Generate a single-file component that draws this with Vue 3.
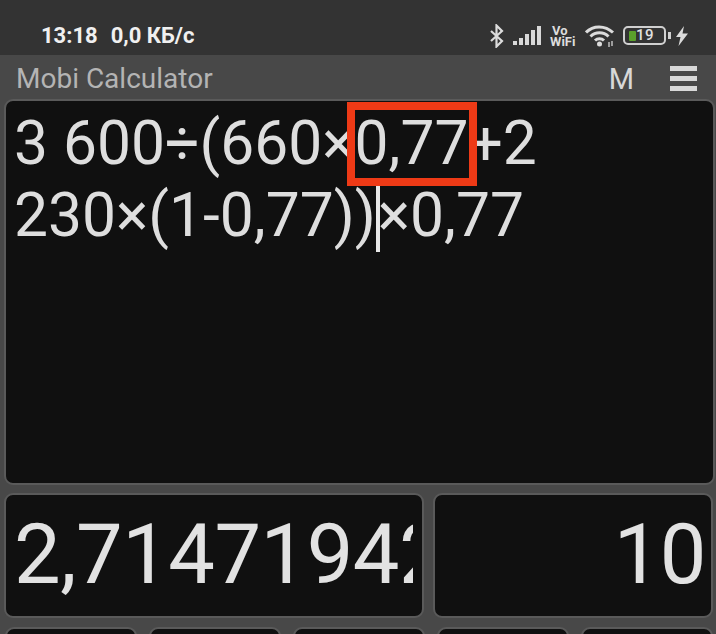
<template>
  <div class="screen">
    <!-- status bar -->
    <div class="status-bar">
      <div class="status-left">
        <span class="clock">13:18</span>
        <span class="speed">0,0 КБ/с</span>
      </div>
      <div class="status-icons">
        <svg width="16" height="24" viewBox="0 0 16 24" class="bt">
          <path d="M2 7l11 10-5.500 5.500V1.500L13 7 2 17" fill="none" stroke="#dcdcdc" stroke-width="2.200" />
        </svg>
        <svg width="29" height="20" viewBox="0 0 29 20" class="signal">
          <rect x="0" y="15" width="4" height="4" fill="#d8d8d8" />
          <rect x="6" y="12" width="4" height="7" fill="#d8d8d8" />
          <rect x="12" y="8" width="4" height="11" fill="#d8d8d8" />
          <rect x="18" y="4" width="4" height="15" fill="#d8d8d8" />
          <rect x="24" y="0" width="4" height="19" fill="#d8d8d8" />
        </svg>
        <div class="vowifi"><span>Vo</span><span>WiFi</span></div>
        <svg width="30" height="24" viewBox="0 0 30 24" class="wifi">
          <path d="M1 8.500C8 1 20 1 28 8.500M5.500 12.500C10.500 7.500 18.500 7.500 23.500 12.500M10 16.500C12.500 14 16.500 14 19 16.500" fill="none" stroke="#dcdcdc" stroke-width="3" />
          <circle cx="14.500" cy="20" r="2.500" fill="#dcdcdc" />
          <path d="M24 18v5M27 17v5" stroke="#c0c0c0" stroke-width="1.500" />
        </svg>
        <div class="battery">
          <div class="battery-body">
            <span class="battery-fill"></span>
            <span class="battery-num">19</span>
          </div>
          <span class="battery-tip"></span>
        </div>
        <svg width="14" height="20" viewBox="0 0 14 20" class="bolt">
          <path d="M9 0L1 11h4.500L3.500 20 13 7.500H7.500z" fill="#dcdcdc" />
        </svg>
      </div>
    </div>

    <!-- app bar -->
    <div class="app-bar">
      <span class="app-title">Mobi Calculator</span>
      <div class="app-actions">
        <span class="mem">M</span>
        <div class="menu"><i></i><i></i><i></i></div>
      </div>
    </div>

    <!-- expression -->
    <div class="panel expression">
      <div class="expr-line">3 600÷(660×0,77+2</div>
      <div class="expr-line">230×(1-0,77))<span class="cursor"></span>×0,77</div>
      <div class="highlight"></div>
    </div>

    <!-- results -->
    <div class="results">
      <div class="panel result-main"><span>2,71471942</span></div>
      <div class="panel result-side">10</div>
    </div>

    <!-- keypad, cut off by the bottom of the screen -->
    <div class="keys">
      <div v-for="n in 5" :key="n" class="panel key"></div>
    </div>
  </div>
</template>

<script setup>
</script>

<style scoped>
.screen {
  width: 716px;
  height: 634px;
  overflow: hidden;
  background: #484848;
  font-family: Roboto, sans-serif;
}

.status-bar {
  height: 55px;
  box-sizing: border-box;
  padding: 22px 27px 0 41px;
  display: flex;
  align-items: flex-start;
  justify-content: space-between;
  background: #333333;
}

.status-left {
  display: flex;
  gap: 13px;
  line-height: 27px;
  font-size: 22px;
  font-weight: 700;
  color: #f0f0f0;
}

.status-icons {
  display: flex;
  align-items: center;
  height: 27px;
}

.bt,
.signal {
  margin-right: 8px;
}

.vowifi {
  display: flex;
  flex-direction: column;
  align-items: flex-start;
  width: 26px;
  margin-right: 9px;
  font-size: 13px;
  font-weight: 700;
  line-height: 11px;
  color: #dcdcdc;
}

.vowifi span:first-child {
  padding-left: 2px;
}

.wifi {
  margin-right: 8px;
}

.battery {
  display: flex;
  align-items: center;
  margin-right: 4px;
}

.battery-body {
  width: 43px;
  height: 19px;
  box-sizing: border-box;
  border: 2px solid #d0d0d0;
  border-radius: 5px;
  display: flex;
  align-items: center;
  padding-left: 4px;
}

.battery-fill {
  width: 7px;
  height: 10px;
  background: #5aa02c;
  border-radius: 1px;
}

.battery-num {
  font-size: 15px;
  font-weight: 500;
  line-height: 15px;
  color: #e0e0e0;
  letter-spacing: 0.5px;
}

.battery-tip {
  width: 3px;
  height: 7px;
  margin-left: 2px;
  background: #d0d0d0;
}

.app-bar {
  height: 44px;
  box-sizing: border-box;
  padding: 3px 19px 0 16px;
  display: flex;
  align-items: center;
  justify-content: space-between;
}

.app-title {
  font-size: 28px;
  color: #b4b4b4;
}

.app-actions {
  display: flex;
  align-items: center;
  gap: 36px;
}

.mem {
  font-size: 29px;
  color: #d8d8d8;
}

.menu {
  width: 27px;
  display: flex;
  flex-direction: column;
  gap: 5px;
}

.menu i {
  height: 5px;
  background: #d8d8d8;
}

.panel {
  box-sizing: border-box;
  background: #101010;
  border: 2px solid #5a5a5a;
  border-radius: 9px;
}

.expression {
  position: relative;
  height: 386px;
  margin: 0 0 0 4px;
  width: 711px;
  padding: 7px 0 0 8px;
  font-size: 60.5px;
  line-height: 72px;
  color: #dedede;
}

.expr-line {
  white-space: nowrap;
}

.cursor {
  display: inline-block;
  width: 4px;
  height: 66px;
  margin-right: -2px;
  vertical-align: -16px;
  background: #e8e8e8;
}

.highlight {
  position: absolute;
  left: 341px;
  top: 1px;
  width: 130px;
  height: 84px;
  box-sizing: border-box;
  border: 8px solid #ee3a16;
}

.results {
  display: flex;
  gap: 9px;
  margin: 8px 0 0 4px;
  width: 709px;
}

.result-main,
.result-side {
  height: 125px;
  font-size: 83px;
  line-height: 119px;
  letter-spacing: -0.5px;
  color: #e2e2e2;
}

.result-main {
  width: 420px;
  padding: 0 9px 0 8px;
}

.result-main span {
  display: block;
  overflow: hidden;
  white-space: nowrap;
}

.result-side {
  width: 280px;
  padding-right: 5px;
  text-align: right;
}

.keys {
  display: flex;
  gap: 12px;
  margin: 9px 0 0 5px;
}

.key {
  width: 132px;
  height: 60px;
}
</style>

<style>
body {
  background: #484848;
}
</style>
